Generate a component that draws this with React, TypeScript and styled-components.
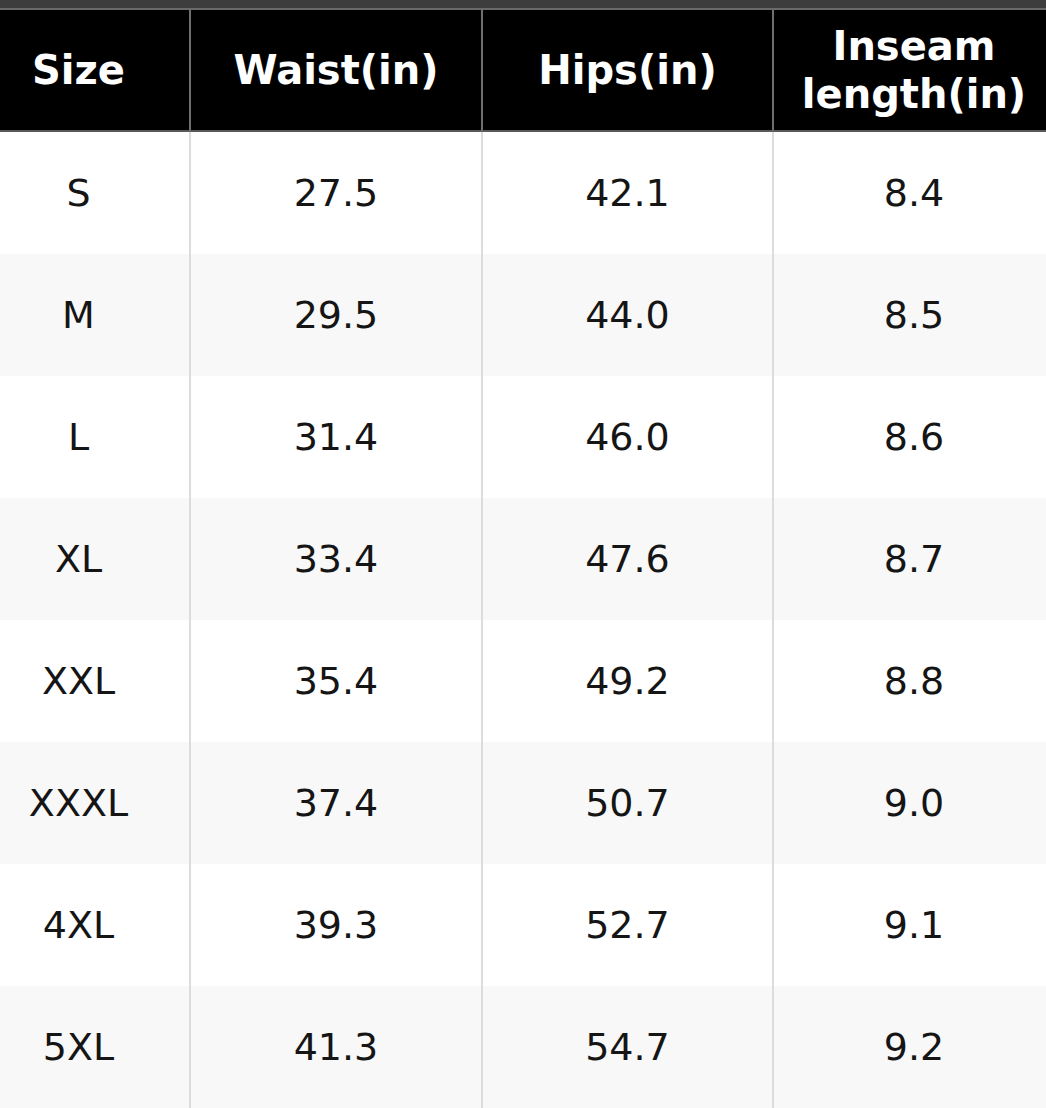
import React from "react";
import styled, { createGlobalStyle } from "styled-components";

const Global = createGlobalStyle`
  html, body { margin: 0; padding: 0; background: #ffffff; }
  body { font-family: "DejaVu Sans", "Liberation Sans", sans-serif; }
`;

const Page = styled.div`
  width: 1046px;
  height: 1108px;
  overflow: hidden;
  display: flex;
  flex-direction: column;
  background: #ffffff;
`;

const TopStrip = styled.div`
  height: 8px;
  background: #3d3d3d;
  border-bottom: 2px solid #6a6a6a;
  flex: none;
`;

/* The screenshot is a crop of a wider table: the first and last columns run past the edges. */
const Grid = styled.div`
  display: grid;
  grid-template-columns: 221px 292px 291px 282px;
  grid-auto-rows: 122px;
  margin-left: -32px;
`;

const HeadCell = styled.div<{ $first?: boolean }>`
  background: #000000;
  color: #ffffff;
  font-family: "DejaVu Sans", sans-serif;
  font-weight: 700;
  font-size: 40px;
  line-height: 48px;
  text-align: center;
  display: flex;
  align-items: center;
  justify-content: center;
  border-left: ${(p) => (p.$first ? "none" : "2px solid #6f6f6f")};
  border-bottom: 2px solid #5a5a5a;
  box-sizing: border-box;
`;

const Cell = styled.div<{ $first?: boolean; $alt?: boolean }>`
  background: ${(p) => (p.$alt ? "#f8f8f8" : "#ffffff")};
  color: #151515;
  font-family: "DejaVu Sans", sans-serif;
  font-size: 38px;
  display: flex;
  align-items: center;
  justify-content: center;
  border-left: ${(p) => (p.$first ? "none" : "2px solid #dcdcdc")};
  box-sizing: border-box;
`;

const HeadText = styled.span`
  white-space: pre-line;
`;

const headers = ["Size", "Waist(in)", "Hips(in)", "Inseam\nlength(in)"];

const rows = [
  ["S", "27.5", "42.1", "8.4"],
  ["M", "29.5", "44.0", "8.5"],
  ["L", "31.4", "46.0", "8.6"],
  ["XL", "33.4", "47.6", "8.7"],
  ["XXL", "35.4", "49.2", "8.8"],
  ["XXXL", "37.4", "50.7", "9.0"],
  ["4XL", "39.3", "52.7", "9.1"],
  ["5XL", "41.3", "54.7", "9.2"],
];

export default function App() {
  return (
    <>
      <Global />
      <Page>
        <TopStrip />
        <Grid>
          {headers.map((h, i) => (
            <HeadCell key={h} $first={i === 0}>
              <HeadText>{h}</HeadText>
            </HeadCell>
          ))}
          {rows.map((r, ri) =>
            r.map((v, ci) => (
              <Cell key={`${ri}-${ci}`} $first={ci === 0} $alt={ri % 2 === 1}>
                {v}
              </Cell>
            ))
          )}
        </Grid>
      </Page>
    </>
  );
}
